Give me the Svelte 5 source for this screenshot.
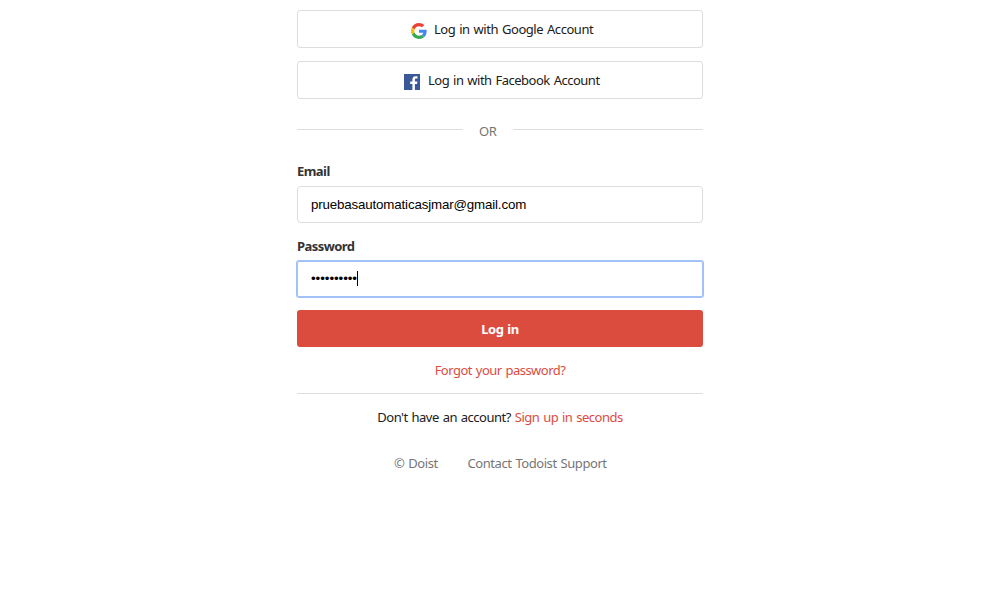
<script>
  const email = 'pruebasautomaticasjmar@gmail.com';
  const masked = '•'.repeat(10);
</script>

<main>
  <button class="social google">
    <svg width="16" height="16" viewBox="0 0 48 48" aria-hidden="true">
      <path fill="#EA4335" d="M24 9.5c3.54 0 6.71 1.22 9.21 3.6l6.85-6.85C35.9 2.38 30.47 0 24 0 14.62 0 6.51 5.38 2.56 13.22l7.98 6.19C12.43 13.72 17.74 9.5 24 9.5z" />
      <path fill="#4285F4" d="M46.98 24.55c0-1.57-.15-3.09-.38-4.55H24v9.02h12.94c-.58 2.96-2.26 5.48-4.78 7.18l7.73 6c4.51-4.18 7.09-10.36 7.09-17.65z" />
      <path fill="#FBBC05" d="M10.53 28.59c-.48-1.45-.76-2.99-.76-4.59s.27-3.14.76-4.59l-7.98-6.19C.92 16.46 0 20.12 0 24c0 3.88.92 7.54 2.56 10.78l7.97-6.19z" />
      <path fill="#34A853" d="M24 48c6.48 0 11.93-2.13 15.89-5.81l-7.73-6c-2.15 1.45-4.92 2.3-8.16 2.3-6.26 0-11.57-4.22-13.47-9.91l-7.98 6.19C6.51 42.62 14.62 48 24 48z" />
    </svg>
    <span>Log in with Google Account</span>
  </button>
  <button class="social facebook">
    <svg width="16" height="16" viewBox="0 0 16 16" aria-hidden="true">
      <path fill="#3b5998" d="M0 0h16v16H0z" />
      <path fill="#fff" d="M8.4 16V9.9H6.2V7.4h2.2V5.6c0-2.1 1.3-3.3 3.2-3.3.9 0 1.7.1 1.9.1v2.2h-1.3c-1 0-1.3.5-1.3 1.2v1.6h2.5l-.3 2.5h-2.2V16z" />
    </svg>
    <span>Log in with Facebook Account</span>
  </button>

  <div class="separator"><i></i><span>OR</span><i></i></div>

  <div class="label email-label"><span>Email</span></div>
  <div class="field">{email}</div>
  <div class="label password-label"><span>Password</span></div>
  <div class="field focused"><span class="dots">{masked}</span><b class="caret"></b></div>

  <button class="submit"><span>Log in</span></button>
  <a class="forgot"><span>Forgot your password?</span></a>
  <p class="signup"><span>Don't have an account?</span><a>Sign up in seconds</a></p>
  <footer><span class="doist">© Doist</span><span class="support">Contact Todoist Support</span></footer>
</main>

<style>
  :global(body) {
    margin: 0;
    background: #fff;
  }
  main {
    box-sizing: border-box;
    width: 406px;
    height: 613px;
    margin: 0 auto;
    padding-top: 10px;
    display: flex;
    flex-direction: column;
    font: 13px/20px "Noto Sans", "Open Sans", sans-serif;
    word-spacing: 1px;
    color: #202020;
  }
  span, a {
    white-space: nowrap;
  }
  button {
    box-sizing: border-box;
    margin: 0;
    padding: 0;
    font: inherit;
    color: inherit;
    flex: none;
  }
  .social {
    display: flex;
    align-items: center;
    height: 38px;
    margin-bottom: 13px;
    background: #fff;
    border: 1px solid #ddd;
    border-radius: 3px;
    word-spacing: 1px;
    letter-spacing: -0.46px;
  }
  .social svg {
    margin-top: 3px;
    flex: none;
  }
  .google {
    padding-left: 113px;
  }
  .google span {
    margin-left: 7px;
  }
  .facebook {
    padding-left: 106px;
    letter-spacing: -0.5px;
  }
  .facebook span {
    margin-left: 8px;
  }
  .separator {
    display: flex;
    align-items: center;
    height: 20px;
    margin-top: 9px;
    color: #767676;
  }
  .separator i {
    flex: none;
    width: 166px;
    height: 1px;
    margin-bottom: 3px;
    background: #ddd;
  }
  .separator i:last-child {
    width: 190px;
  }
  .separator span {
    width: 34px;
    padding-left: 16px;
    letter-spacing: -0.3px;
  }
  .label {
    height: 20px;
    font-weight: 700;
    color: #333;
    letter-spacing: -0.55px;
  }
  .email-label {
    margin-top: 20px;
  }
  .password-label {
    margin-top: 13px;
  }
  .field {
    box-sizing: border-box;
    display: flex;
    align-items: center;
    flex: none;
    height: 37px;
    margin-top: 5px;
    padding: 0 13px;
    border: 1px solid #ddd;
    border-radius: 4px;
    font: 13.333px/16px "Liberation Sans", Arial, sans-serif;
    letter-spacing: -0.16px;
    color: #000;
  }
  .focused {
    height: 36px;
    padding-bottom: 1px;
    letter-spacing: -0.07px;
    border-color: #a3c1f9;
    box-shadow: 0 0 0 1px #a3c1f9;
    border-radius: 2px;
  }
  .caret {
    width: 1px;
    height: 15px;
    background: #000;
  }
  .submit {
    height: 37px;
    margin-top: 13px;
    background: #db4c3f;
    border: 0;
    border-radius: 3px;
    color: #fff;
    font-weight: 700;
    word-spacing: 1px;
    letter-spacing: -0.45px;
  }
  .forgot {
    margin-top: 13px;
    padding-bottom: 13px;
    border-bottom: 1px solid #ddd;
    text-align: center;
    color: #db4c3f;
    letter-spacing: -0.52px;
  }
  .signup {
    display: flex;
    justify-content: center;
    gap: 4px;
    margin: 13px 0 0;
    letter-spacing: -0.51px;
  }
  .signup a {
    color: #db4c3f;
  }
  footer {
    display: flex;
    margin-top: 26px;
    padding-left: 97px;
    color: #767676;
    letter-spacing: -0.44px;
  }
  .doist {
    width: 73.5px;
  }
</style>
